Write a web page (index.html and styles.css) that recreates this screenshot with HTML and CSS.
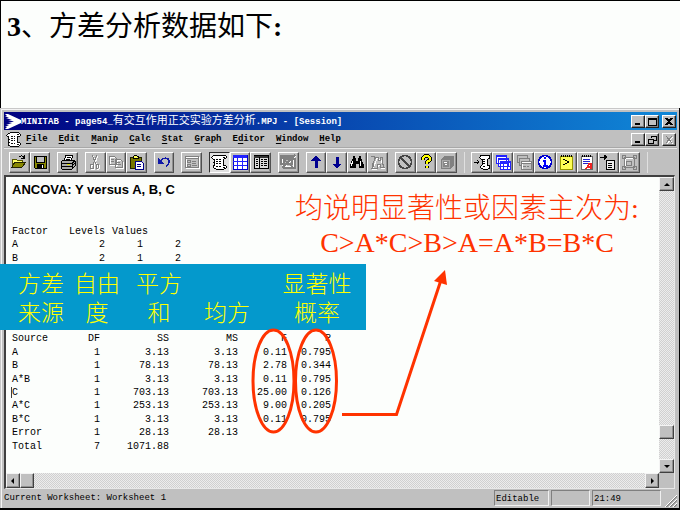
FILE: index.html
```html
<!DOCTYPE html>
<html lang="zh-CN">
<head>
<meta charset="utf-8">
<title>方差分析</title>
<link rel="stylesheet" href="styles.css">
</head>
<body>
<main class="slide">
  <h1 class="slide-title"><b>3</b>、方差分析数据如下<b>:</b></h1>

  <section class="window">
    <header class="titlebar">
      <svg class="logo" viewBox="0 0 16 15"><path fill="#fff" d="M0 0h3l13 6v3L3 15H0l2-2H0l4-2H1l6-2H3l6-1.5L3 6h4L1 4h3L0 2h2z"/></svg>
      <span class="caption">MINITAB - page54_<span class="han">有交互作用正交实验方差分析</span>.MPJ - [Session]</span>
      <span class="controls">
        <button aria-label="Minimize"><svg viewBox="0 0 10 9"><path d="M2 7h5" class="k2"/></svg></button>
        <button aria-label="Maximize"><svg viewBox="0 0 10 9"><path d="M1 1h8v7.500H1zM1 2h8" class="k"/></svg></button>
        <button class="close" aria-label="Close"><svg viewBox="0 0 10 9"><path d="M2 1l6 7M8 1L2 8" class="k2"/></svg></button>
      </span>
    </header>

    <nav class="menubar">
      <svg class="doc" viewBox="0 0 16 16"><use href="#scroll"/></svg>
      <button><u>F</u>ile</button><button><u>E</u>dit</button><button><u>M</u>anip</button><button><u>C</u>alc</button><button><u>S</u>tat</button><button><u>G</u>raph</button><button>E<u>d</u>itor</button><button><u>W</u>indow</button><button><u>H</u>elp</button>
      <span class="controls">
        <button aria-label="Minimize document"><svg viewBox="0 0 10 9"><path d="M2 7h5" class="k2"/></svg></button>
        <button aria-label="Restore document"><svg viewBox="0 0 10 9"><path d="M4 3V1h5v4H7M4 1.500h5M1 4h5v4H1zM1 4.500h5" class="k"/></svg></button>
        <button class="close" aria-label="Close document"><svg viewBox="0 0 10 9"><path d="M3 2l6 7M9 2L3 9" stroke="#fff"/><path d="M2 1l6 7M8 1L2 8" stroke="#808080"/></svg></button>
      </span>
    </nav>

    <div class="toolbar">
      <div class="band main-band">
        <div class="group g2">
          <button aria-label="Open"><svg viewBox="0 0 16 16"><path d="M1 13V5h4l1 1h5v2" fill="#ff6" stroke="#550"/><path d="M1 13l3-5h11l-4 5z" fill="#880" stroke="#220"/><path d="M8 3c2-2 4-1 5 1m0-3v3h-3" class="k"/></svg></button>
          <button aria-label="Save"><svg viewBox="0 0 16 16"><path d="M2 2h12v12H3l-1-1z" fill="#880" stroke="#000"/><path d="M4 2h8v6H4z" fill="#c0c0c0" stroke="#000"/><path d="M5 10h7v4H5z"/><path d="M10 11h1v3h-1z" fill="#fff"/></svg></button>
        </div>
        <div class="group">
          <button aria-label="Print"><svg viewBox="0 0 16 16"><path d="M4 7l2-6h7l-2 6" fill="#fff" stroke="#000"/><path d="M7 3h4M6 5h4" class="k"/><path d="M1 8l2-2h10l2 1v5l-3 3H2l-1-2z" fill="#aaa" stroke="#000"/><path d="M1 9h11l3-2M1 12h11l3-3M12 9v6" class="k"/><path d="M7 10.500h3" stroke="#dd0"/></svg></button>
        </div>
        <div class="group g3">
          <button aria-label="Cut" disabled><svg viewBox="0 0 16 16"><g class="w"><path d="M6 2l4 9M11 2l-4 9M5 11h2v4H4v-3zM10 11h2l1 3-1 1h-2z"/></g><g class="g"><path d="M5 1l4 9M10 1l-4 9M4 10h2v4H3v-3zM9 10h2l1 3-1 1H9z"/></g></svg></button>
          <button aria-label="Copy" disabled><svg viewBox="0 0 16 16"><g class="w"><path d="M2 3h5l2 2v6H2zM8 6h5l2 2v6H8z"/></g><g class="g"><path d="M1 2h5l2 2v6H1zM3 5h3M3 7h3M7 5h5l2 2v6H7zM9 8h3M9 10h4"/></g></svg></button>
          <button aria-label="Paste"><svg viewBox="0 0 16 16"><path d="M2 3h11v11H2z" fill="#770" stroke="#220"/><path d="M5 4V2h1l1-1h1l1 1h1v2z" fill="#ff5" stroke="#000"/><path d="M7 7h6l2 2v6H7z" fill="#fff" stroke="#008"/><path d="M9 10h4M9 12h4" stroke="#008"/></svg></button>
        </div>
        <div class="group">
          <button aria-label="Undo"><svg viewBox="0 0 16 16"><path d="M4 7c3-4 9-4 9 1 0 2-1 3-3 4" fill="none" stroke="#1018a8" stroke-width="1.500"/><path d="M2 4v6h6z" fill="#1018a8"/></svg></button>
        </div>
        <div class="group">
          <button aria-label="Last dialog" disabled><svg viewBox="0 0 16 16"><g class="w"><path d="M2 3h13v11H2z"/></g><g class="g"><path d="M1 2h13v11H1zM1 4h13M3 6h3v2H3zM3 10h3v2H3zM8 7h4M8 9h4M8 11h5"/></g></svg></button>
        </div>
        <div class="group g3">
          <button class="pressed" aria-label="Session window"><svg viewBox="0 0 16 16"><g id="scroll"><path d="M4 1h9c3 0 3 4 0 4h-1v6h1c3 0 3 4 0 4H5c-3 0-3-3-2-4V5H2C0 5 1 1 4 1z" fill="#fff" stroke="#000"/><path d="M5 5h2m1 0h2M5 7h2m1 0h2M5 9h2m1 0h2M5 12h2m1 0h2M12 3h2M12 13h2M2 8h2M2 11h2" class="k"/></g></svg></button>
          <button aria-label="Worksheet"><svg viewBox="0 0 16 16"><path d="M1 1h14v14H1z" fill="#fff" stroke="#00c"/><path d="M1 2.500h14" stroke="#22f" stroke-width="3"/><path d="M5 3v12M10 3v12M1 7h14M1 11h14" stroke="#22f"/></svg></button>
          <button aria-label="Project"><svg viewBox="0 0 16 16"><path d="M1 1h14v13H1z" fill="#ddd" stroke="#000"/><path d="M1 2.500h14" stroke="#333" stroke-width="2"/><path d="M6 3v11M3 5h2M3 7h2M3 9h2M3 11h2M8 5h2m1 0h3M8 7h2m1 0h3M8 9h2m1 0h3M8 11h2m1 0h3" class="k"/></svg></button>
        </div>
        <div class="group">
          <button aria-label="Close graphs" disabled><svg viewBox="0 0 16 16"><g class="w"><path d="M2 3h11v9H2zM3 15L16 2"/></g><g class="g"><path d="M1 2h11v8H1zM4 5h11v9H4zM1 4h11M2 14L15 1M1 3l13 11" stroke-width="1.500"/></g></svg></button>
        </div>
        <div class="group g4">
          <button aria-label="Previous command"><svg viewBox="0 0 16 16"><path d="M8 2l4 4H9v7H7V6H4z" fill="#000090" stroke="#000090"/></svg></button>
          <button aria-label="Next command"><svg viewBox="0 0 16 16"><path d="M8 14l4-4H9V3H7v7H4z" fill="#000090" stroke="#000090"/></svg></button>
          <button aria-label="Find"><svg viewBox="0 0 16 16"><path d="M4 2h2v2h1v3h2V4h1V2h2v2l3 7v3h-5v-4H7v4H1v-3l3-7z"/><path d="M4 7l-2 5M11 7v5" stroke="#fff"/></svg></button>
          <button aria-label="Find next" disabled><svg viewBox="0 0 16 16"><g class="w"><path d="M7 4l4 2 3 8h-3l-2-4-2 5H3z"/></g><g class="g"><path d="M6 3h2v3h2V3h2v3l2 7h-4v-3H7v4H2l1-5zM4 9l-1 4M12 8v3M1 2h3v3"/></g></svg></button>
        </div>
        <div class="group g3">
          <button aria-label="Cancel"><svg viewBox="0 0 16 16"><circle cx="8" cy="8" r="6.500" fill="none" stroke="#444" stroke-width="1.500"/><path d="M3 3l10 10" stroke="#444" stroke-width="1.500"/></svg></button>
          <button aria-label="Help"><svg viewBox="0 0 16 16"><path d="M5 6V4l2-2h3l2 2v2L9 8v2M9 12v2" fill="none" stroke="#000" stroke-width="4"/><path d="M5 6V4l2-2h3l2 2v2L9 8v2M9 12v2" fill="none" stroke="#ff0" stroke-width="2"/></svg></button>
          <button aria-label="StatGuide" disabled><svg viewBox="0 0 16 16"><path d="M2 5l4-3h9v9l-4 4H2z" fill="#808080"/><path d="M3 6h7v7H3z" fill="#888" stroke="#aaa"/><path d="M5 8h3M6 10h2" class="w"/></svg></button>
        </div>
      </div>
      <div class="band project-band">
        <div class="group g8">
          <button aria-label="Session folder"><svg viewBox="0 0 16 16"><path d="M8 1h6c2 0 2 4 0 4h-1v6h1c2 0 2 4 0 4H9c-3 0-3-3-1-4V5H7c-2 0-1-4 1-4z" fill="#fff" stroke="#000"/><path d="M0 8h5M3 6l2 2-2 2M9 5h2M9 7h2M9 9h2M9 12h2" class="k"/></svg></button>
          <button aria-label="Worksheets folder"><svg viewBox="0 0 16 16"><path d="M1 1h10v8H1zM3 4h10v8H3zM5 7h10v8H5z" fill="#fff" stroke="#22f"/><path d="M1 2h10M3 5h10M5 8h10" stroke="#22f" stroke-width="2"/><path d="M8 8v7M12 8v7M5 12h10" stroke="#22f"/></svg></button>
          <button aria-label="Graphs folder" disabled><svg viewBox="0 0 16 16"><g class="w"><path d="M6 8h10v8H6z"/></g><g class="g"><path d="M1 1h10v3M1 1v7h2M3 4h10v3M3 4v7h2M5 7h10v8H5zM5 9h10M7 12h3m1 0h2"/></g></svg></button>
          <button aria-label="Info"><svg viewBox="0 0 16 16"><circle cx="8" cy="8" r="6.500" fill="#fff" stroke="#00c" stroke-width="1.500"/><path d="M8 3v2M6 7h2v5M6 12h5" fill="none" stroke="#00f" stroke-width="2"/></svg></button>
          <button aria-label="History"><svg viewBox="0 0 16 16"><path d="M2 2h12v13H2z" fill="#ff5" stroke="#990"/><path d="M3 2h11" stroke="#000" stroke-width="2" stroke-dasharray="1 1"/><path d="M5 5l6 3-6 3" class="k"/></svg></button>
          <button aria-label="Report pad"><svg viewBox="0 0 16 16"><path d="M2 2h11v13H2z" fill="#fff" stroke="#666"/><path d="M3 2h10" stroke="#000" stroke-width="2" stroke-dasharray="1 1"/><path d="M4 5h7M4 7h7M4 9h5" stroke="#22c"/><path d="M7 15l3-5h2v5M9 13h3" fill="none" stroke="#e22" stroke-width="1.500"/></svg></button>
          <button aria-label="Related documents"><svg viewBox="0 0 16 16"><path d="M6 6h8v9H6z" fill="#eee" stroke="#000"/><path d="M8 9h4M8 11h4M8 13h4" class="k"/><path d="M0 3h5M4 1l3 2-3 3z" fill="#000" stroke="#000"/></svg></button>
          <button aria-label="Design" disabled><svg viewBox="0 0 16 16"><g class="w"><path d="M4 4h9v9H4z"/></g><g class="g"><path d="M3 3h10v10H3zM1 1h3v3H1zM12 1h3v3h-3zM1 12h3v3H1zM12 12h3v3h-3zM5 7h5v4H5z"/></g></svg></button>
        </div>
      </div>
    </div>

    <div class="session">
      <div class="output">
        <h2>ANCOVA: Y versus A, B, C</h2>
        <table class="factors">
          <colgroup><col class="c-factor"><col class="c-levels"><col class="c-value"><col class="c-value"></colgroup>
          <tr><th>Factor</th><th>Levels</th><th colspan="2" class="values">Values</th></tr>
          <tr><td>A</td><td>2</td><td>1</td><td>2</td></tr>
          <tr><td>B</td><td>2</td><td>1</td><td>2</td></tr>
        </table>
        <table class="anova">
          <colgroup><col class="c-source"><col class="c-df"><col class="c-sum"><col class="c-sum"><col class="c-f"><col class="c-p"></colgroup>
          <tr><th>Source</th><th>DF</th><th>SS</th><th>MS</th><th>F</th><th>P</th></tr>
          <tr><td>A</td><td>1</td><td>3.13</td><td>3.13</td><td>0.11</td><td>0.795</td></tr>
          <tr><td>B</td><td>1</td><td>78.13</td><td>78.13</td><td>2.78</td><td>0.344</td></tr>
          <tr><td>A*B</td><td>1</td><td>3.13</td><td>3.13</td><td>0.11</td><td>0.795</td></tr>
          <tr><td><span class="caret">C</span></td><td>1</td><td>703.13</td><td>703.13</td><td>25.00</td><td>0.126</td></tr>
          <tr><td>A*C</td><td>1</td><td>253.13</td><td>253.13</td><td>9.00</td><td>0.205</td></tr>
          <tr><td>B*C</td><td>1</td><td>3.13</td><td>3.13</td><td>0.11</td><td>0.795</td></tr>
          <tr><td>Error</td><td>1</td><td>28.13</td><td>28.13</td><td></td><td></td></tr>
          <tr><td>Total</td><td>7</td><td>1071.88</td><td></td><td></td><td></td></tr>
        </table>
      </div>
      <div class="vscroll">
        <button aria-label="Scroll up"><svg viewBox="0 0 10 10"><path d="M2 7l3-3 3 3z"/></svg></button>
        <span class="space"></span>
        <span class="thumb"></span>
        <span class="rest"></span>
        <button aria-label="Scroll down"><svg viewBox="0 0 10 10"><path d="M2 4l3 3 3-3z"/></svg></button>
      </div>
      <div class="hscroll">
        <button aria-label="Scroll left"><svg viewBox="0 0 10 10"><path d="M6 2L3 5l3 3z"/></svg></button>
        <span class="thumb"></span>
        <span class="space"></span>
        <button aria-label="Scroll right"><svg viewBox="0 0 10 10"><path d="M4 2l3 3-3 3z"/></svg></button>
      </div>
    </div>

    <footer class="statusbar">
      <span class="message">Current Worksheet: Worksheet 1</span>
      <span class="pane mode">Editable</span>
      <span class="pane blank"></span>
      <span class="pane time">21:49</span>
      <svg class="grip" viewBox="0 0 12 12"><path d="M1 12L12 1M5 12l7-7M9 12l3-3" stroke="#808080" stroke-width="1.500"/><path d="M0 12L12 0M4 12l8-8M8 12l4-4" stroke="#fff"/></svg>
    </footer>
  </section>

  <div class="labels">
    <span>方差<br>来源</span><span>自由<br>度</span><span>平方<br>和</span><span><br>均方</span><span>显著性<br>概率</span>
  </div>
  <p class="note">均说明显著性或因素主次为:<br>C&gt;A*C&gt;B&gt;A=A*B=B*C</p>
  <svg class="marks" width="460" height="440" viewBox="0 0 460 440">
    <g fill="none" stroke="#ff3300" stroke-width="3"><ellipse cx="273.500" cy="381" rx="20.500" ry="51"/><ellipse cx="316" cy="381" rx="20.500" ry="51"/><path d="M342 414.500h54.500L441 280"/></g>
    <path fill="#ff3300" d="M445 270l2 15-13-4z"/>
  </svg>
</main>
</body>
</html>
```
FILE: styles.css
```css
* { box-sizing: border-box; }

body {
  margin: 0;
  background: #fcfefc;
  color: #000;
}

button {
  padding: 0;
  font: inherit;
  color: inherit;
  background: #c0c0c0;
}

.slide {
  position: relative;
  display: flex;
  flex-direction: column;
  min-height: 100vh;
}

.slide-title {
  flex: 0 0 108px;
  margin: 0;
  padding: 6px 0 0 6px;
  border: solid #000;
  border-width: 1px 0 0 1px;
  font: 400 28px/40px "Liberation Serif", "Noto Sans CJK SC", serif;
}

/* Application window */
.window {
  flex: 1;
  display: flex;
  flex-direction: column;
  padding: 4px 2px 1px 4px;
  background: #c0c0c0;
  border: solid #000;
  border-width: 0 1px 2px 0;
  box-shadow: inset 1px 1px #c8c8c8, inset 2px 2px #f4f4f4;
  font: 9px/16px "Liberation Mono", "Noto Sans CJK SC", monospace;
}

.titlebar, .menubar {
  display: flex;
  align-items: center;
  flex: 0 0 18px;
  padding: 0 1px;
}

.titlebar {
  color: #fff;
  background: linear-gradient(90deg, #000080, #0848b0 50%, #1088d8);
}

.logo { width: 16px; height: 15px; }
.caption { flex: 1; white-space: nowrap; font-weight: 700; }
.han { font-size: 11px; font-weight: 400; }

.controls { display: flex; margin-left: auto; }

.controls button {
  display: flex;
  width: 14px;
  height: 13px;
  border: 1px solid;
  border-color: #fff #202020 #202020 #fff;
  box-shadow: inset -1px -1px #808080;
}

.controls .close { margin-left: 3px; }
.controls svg { width: 10px; height: 9px; margin: 1px; }

.k { fill: none; stroke: #000; }
.k2 { fill: none; stroke: #000; stroke-width: 2; }
.g { fill: none; stroke: #808080; }
.w { fill: none; stroke: #fff; }

.menubar { gap: 11px; padding-left: 2px; font-weight: 700; }
.menubar > button { border: 0; background: none; }
.doc { width: 15px; height: 15px; margin-right: -6px; }
.menubar u { text-underline-offset: 2px; }

.toolbar {
  display: flex;
  flex: 0 0 27px;
  align-items: center;
  padding-left: 5px;
  border-top: 1px solid #e8e8e8;
  box-shadow: 0 -1px #a8a8a8;
}

.band { display: flex; gap: 7px; }
.main-band { width: 448px; }

.project-band {
  width: 184px;
  padding: 0 7px 0 6px;
  margin-left: 7px;
  border: solid #e0e0e0;
  border-width: 0 1px;
}

.group { display: flex; flex: 1 0 0; }
.g2 { flex-grow: 2; }
.g3 { flex-grow: 3; }
.g4 { flex-grow: 4; }
.g8 { flex-grow: 8; }

.group button {
  display: flex;
  flex: 1 0 0;
  align-items: center;
  justify-content: center;
  height: 21px;
  border: 1px solid;
  border-color: #fff #505050 #505050 #fff;
  box-shadow: inset -1px -1px #909090;
}

.group .pressed {
  background: #e0e0e0;
  border-color: #303030 #fff #fff #303030;
  box-shadow: none;
}

.group svg { width: 16px; height: 16px; }
.group svg, .doc, .controls svg { shape-rendering: crispEdges; }

/* Session output */
.session {
  flex: 1;
  display: grid;
  grid-template: 1fr 15px / 1fr 15px;
  margin: 0 2px 0 0;
  border: solid;
  border-width: 2px 1px 1px 2px;
  border-color: #404040 #e8e8e8 #e8e8e8 #404040;
  background: #c0c0c0;
}

.output {
  padding: 5px 6px 0;
  background: #fcfefc;
  font: 10px/13px "Liberation Mono", monospace;
}

.output h2 {
  margin: 0 0 27px;
  font: 700 13px/16px "Liberation Sans", sans-serif;
}

table { table-layout: fixed; border-collapse: collapse; }
th, td { padding: 0; font-weight: 400; text-align: right; white-space: nowrap; }
th:first-child, td:first-child { text-align: left; }

.factors { width: 169px; height: 40px; margin-bottom: 67px; }
.factors .values { padding-left: 7px; text-align: left; }
.c-factor { width: 46px; }
.c-levels { width: 47px; }
.c-value { width: 38px; }

.anova { width: 319px; height: 121px; }
.c-source { width: 38px; }
.c-df { width: 50px; }
.c-sum { width: 69px; }
.c-f { width: 49px; }
.c-p { width: 44px; }
.caret { box-shadow: -1px 0 #404040; }

.vscroll, .hscroll {
  display: flex;
  background: repeating-conic-gradient(#d0d0d0 0 25%, #ececec 0 50%) 0 0 / 2px 2px;
}

.vscroll { flex-direction: column; }
.hscroll { grid-row: 2; }

.vscroll button, .hscroll button, .thumb {
  display: flex;
  flex: 0 0 14px;
  align-items: center;
  justify-content: center;
  background: #c0c0c0;
  border: 1px solid;
  border-color: #f4f4f4 #404040 #404040 #f4f4f4;
  box-shadow: inset -1px -1px #909090;
}

.vscroll svg, .hscroll svg { width: 10px; height: 10px; }
.space { flex: 1; }
.rest { flex: 0 0 20px; }

/* Status bar */
.statusbar {
  display: flex;
  flex: 0 0 18px;
  align-items: center;
  gap: 2px;
}

.message { flex: 1; }

.pane {
  height: 16px;
  padding-left: 1px;
  border: 1px solid;
  border-color: #808080 #f0f0f0 #f0f0f0 #808080;
}

.mode { width: 55px; }
.blank { width: 39px; }
.time { width: 69px; }
.grip { width: 12px; height: 12px; margin-left: 2px; align-self: flex-end; }

/* Slide annotations over the window */
.labels {
  position: absolute;
  left: 0;
  top: 264px;
  display: grid;
  grid-template-columns: 52px 60px 64px 72px 108px;
  width: 366px;
  height: 66px;
  padding: 4px 0 0 15px;
  background: #0499cc;
  color: #ffff00;
  font: 300 23px/29px "Noto Sans CJK SC", sans-serif;
  text-align: center;
}

.note {
  position: absolute;
  left: 287px;
  top: 192px;
  width: 360px;
  margin: 0;
  color: #ff3300;
  font: 300 28px/34px "Liberation Serif", "Noto Sans CJK SC", serif;
  text-align: center;
}

.marks { position: absolute; left: 0; top: 0; pointer-events: none; }
```
